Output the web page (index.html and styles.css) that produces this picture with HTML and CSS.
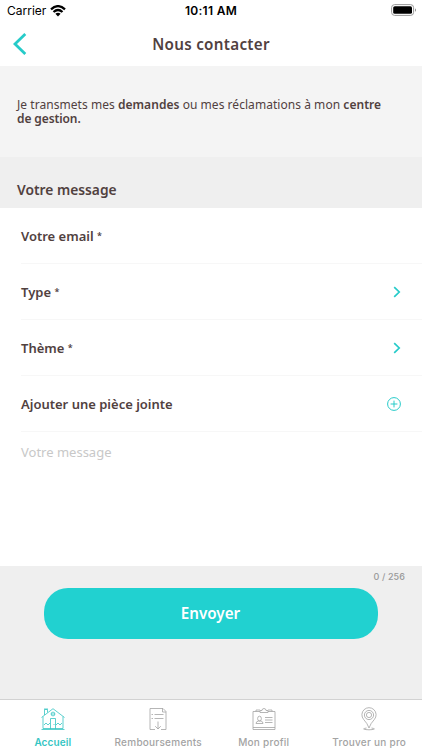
FILE: index.html
```html
<!DOCTYPE html>
<html lang="fr">
<head>
<meta charset="utf-8">
<title>Nous contacter</title>
<link rel="stylesheet" href="styles.css">
</head>
<body>
<div class="status">
  <div class="carrier"><span>Carrier</span>
    <svg width="16" height="12" viewBox="0 0 16 12" fill="none" stroke="#000" stroke-width="2.3"><path d="M1 4.300Q8-2 15 4.300M3.500 7Q8 3 12.500 7"/><path d="M5.400 8.700Q8 6.800 10.600 8.700L8 11.400Z" fill="#000" stroke="none"/></svg>
  </div>
  <div class="time">10:11 AM</div>
  <svg class="battery" width="26" height="12" viewBox="0 0 26 12"><rect x=".6" y=".6" width="22" height="10.800" rx="3" fill="#fff" stroke="#999"/><rect x="2.200" y="2.200" width="18.800" height="7.600" rx="1.600"/><path d="M24 4.200Q26 6 24 7.800Z" fill="#888"/></svg>
</div>
<header class="header">
  <svg class="back" width="14" height="22" viewBox="0 0 14 22" fill="none" stroke="#26cbc9" stroke-width="2.800"><path d="M12.300 1L2 11L12.300 21"/></svg>
  <h1>Nous contacter</h1>
</header>
<section class="intro"><p>Je transmets mes <b>demandes</b> ou mes réclamations à mon <b>centre</b></p><p><b>de gestion.</b></p></section>
<h2 class="section-title"><span>Votre message</span></h2>
<main class="form">
  <div class="row"><span>Votre email <i>*</i></span></div>
  <div class="row"><span>Type <i>*</i></span><svg class="chevron" width="8" height="12" viewBox="0 0 8 12"><path d="M1.200 1.200L6.200 6L1.200 10.800"/></svg></div>
  <div class="row"><span>Thème <i>*</i></span><svg class="chevron" width="8" height="12" viewBox="0 0 8 12"><path d="M1.200 1.200L6.200 6L1.200 10.800"/></svg></div>
  <div class="row"><span>Ajouter une pièce jointe</span><svg class="plus" width="14" height="14" viewBox="0 0 14 14"><circle cx="7" cy="7" r="6.400"/><path d="M7 3.600V10.400M3.600 7H10.400"/></svg></div>
  <div class="message"><span>Votre message</span></div>
</main>
<section class="submit">
  <div class="count"><span>0 / 256</span></div>
  <button type="button"><span>Envoyer</span></button>
</section>
<nav class="tabs">
  <div class="tab active">
    <svg width="26" height="24" viewBox="0 0 26 24"><path d="M1.500 10.500L13 1.700L24.500 10.500M3 9.500V21.500H23V9.500M1.500 22.500H24.500M4.500 8V2.500H7.500V5.500M4 2H8"/><circle cx="13" cy="7" r="1.900"/><path d="M11 7H15M10.500 22V11.500H15.500V22M14 17V18M4 18L6 16L8 18L10 16M16 18L18 16L20 18L22 16"/></svg>
    <span>Accueil</span>
  </div>
  <div class="tab">
    <svg width="26" height="24" viewBox="0 0 26 24"><path d="M10 22.500H5V1.500H18L21 4.500V22.500H16M17.500 1.500V5H21M9.500 7.500H18.500M9.500 11.500H18.500M6.500 7.500H8M6.500 11.500H8M13 14.500V22M10.200 19.200L13 22L15.800 19.200"/></svg>
    <span>Remboursements</span>
  </div>
  <div class="tab">
    <svg width="26" height="24" viewBox="0 0 26 24"><path d="M9 4.500H2V22.500H24V4.500H17M2 20.500H24M5 4.500V3H9M17 3H21V4.500M9 5.500V3.500H11Q11 1.500 13 1.500T15 3.500H17V5.500ZM14 10.500H21.500M14 13H21.500M14 15.500H21.500M5 16.500Q5 14.500 7.500 14L10 14Q12 14.500 12 16.500Z"/><ellipse cx="8.500" cy="11.600" rx="1.900" ry="2.400"/></svg>
    <span>Mon profil</span>
  </div>
  <div class="tab">
    <svg width="26" height="24" viewBox="0 0 26 24"><path d="M13 21Q11.500 16.500 7.600 12.400A7.100 7.100 0 1 1 18.400 12.400Q14.500 16.500 13 21ZM10.500 21Q5 22 10 22.600Q13 23 16 22.600Q21 22 15.500 21"/><circle cx="13" cy="8" r="4.600"/><circle cx="13" cy="8" r="2.600"/></svg>
    <span>Trouver un pro</span>
  </div>
</nav>
</body>
</html>
```
FILE: styles.css
```css
* { box-sizing: border-box; }
body { margin: 0; width: 422px; height: 750px; overflow: hidden; display: flex; flex-direction: column; background: #fff; color: #51413f; font-family: "Noto Sans", sans-serif; font-weight: 600; }
span, b, h1, p { white-space: nowrap; }
.status { height: 22px; flex: none; display: grid; grid-template-columns: 1fr auto 1fr; align-items: center; padding: 0 5px 0 7px; color: #000; font: 400 12px/22px Inter, sans-serif; }
.carrier { display: flex; align-items: center; gap: 4px; }
.time { margin-right: 2px; font-weight: 600; font-size: 12px; letter-spacing: .3px; }
.battery { justify-self: end; margin-top: -2px; }
.header { height: 44px; flex: none; display: grid; grid-template-columns: 40px 1fr 40px; align-items: center; }
.back { margin-left: 13px; }
h1 { margin: 0; text-align: center; font-size: 15.200px; font-weight: 600; letter-spacing: .3px; }
.intro { height: 91px; flex: none; background: #f4f4f4; padding: 32px 17px 0; }
.intro p { margin: 0; font-size: 12px; line-height: 14px; font-weight: 400; letter-spacing: .045px; }
.intro p + p { letter-spacing: -.1px; }
.intro b { font-weight: 600; }
.section-title { margin: 0; height: 51px; flex: none; display: flex; align-items: center; padding: 13px 17px 0; background: #efefef; font-size: 13.800px; font-weight: 600; }
.form { height: 358px; flex: none; padding-left: 21px; }
.row { height: 56px; display: flex; align-items: center; justify-content: space-between; padding-right: 21px; border-bottom: 1px solid #f7f7f7; font-size: 13px; }
.row span { padding-top: 1px; }
.row i { font-style: normal; font-size: 9px; vertical-align: 2px; }
.chevron { fill: none; stroke: #26cbc9; stroke-width: 1.700; }
.plus { fill: none; stroke: #26cbc9; stroke-width: 1; }
.message { padding-top: 10px; color: #c8c8c8; font-size: 13px; line-height: 20px; font-weight: 400; }
.submit { height: 133px; flex: none; background: #efefef; }
.count { height: 22px; padding: 4px 17px 0 0; text-align: right; font: 500 9px/14px Inter, sans-serif; letter-spacing: .1px; color: #999; }
button { display: flex; align-items: center; justify-content: center; width: 334px; height: 51px; margin-left: 44px; padding: 0 1px 2px 0; border: 0; border-radius: 24px; background: #21d1d0; color: #fff; font: 600 15.200px "Noto Sans", sans-serif; }
.tabs { height: 51px; flex: none; display: grid; grid-template-columns: repeat(4, 1fr); border-top: 1px solid #d2d2d2; color: #a3a3a3; }
.tab { display: flex; flex-direction: column; align-items: center; padding-top: 7px; font: 500 10px/14px Inter, sans-serif; letter-spacing: .25px; }
.tab svg { fill: none; stroke: currentColor; stroke-width: .8; flex: none; }
.tab span { margin-top: 4px; }
.active { color: #35c5c3; font-weight: 600; letter-spacing: .1px; }
```
